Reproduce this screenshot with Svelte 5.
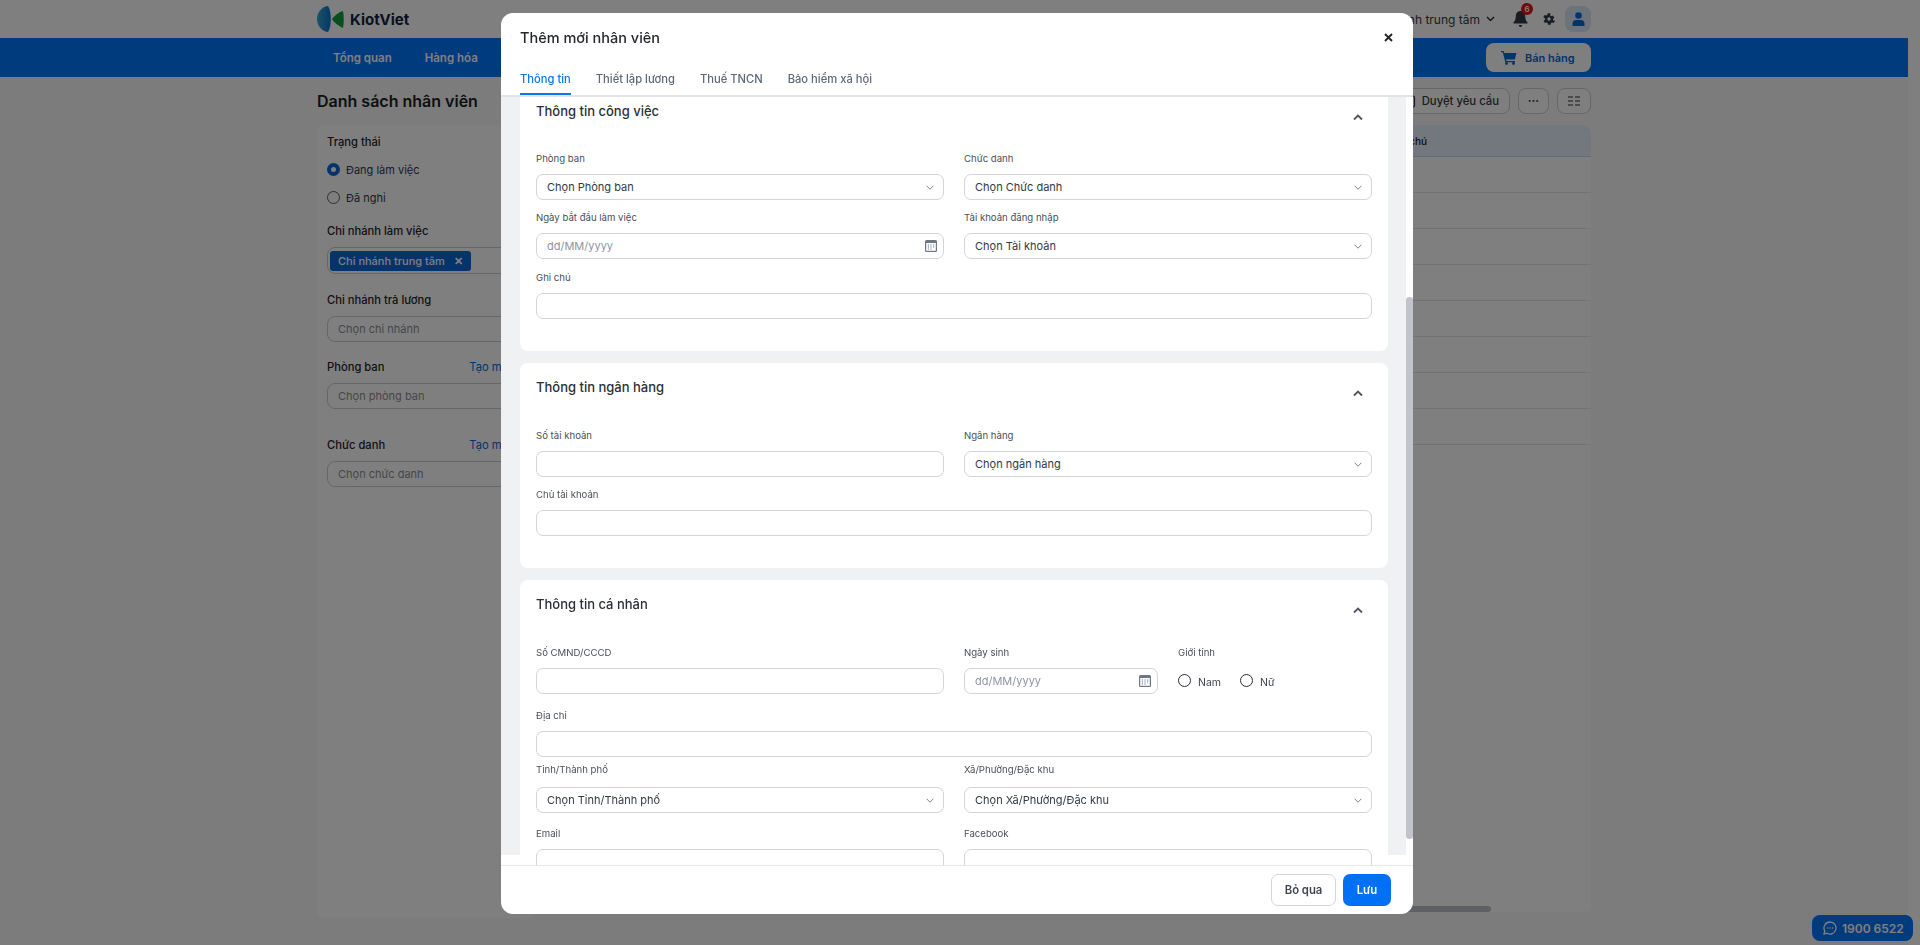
<script lang="ts">
  const navItems = ['Tổng quan', 'Hàng hóa', 'Đơn hàng', 'Khách hàng'];
  const tabs = ['Thông tin', 'Thiết lập lương', 'Thuế TNCN', 'Bảo hiểm xã hội'];
  const tableRows = Array.from({ length: 8 });
</script>

{#snippet chevron()}
  <svg class="chev" width="8" height="5" viewBox="0 0 8 5"><path d="M.5.7L4 4.200 7.500.7" fill="none" stroke="#7a808a" stroke-width="1"/></svg>
{/snippet}

{#snippet calendar()}
  <svg class="cal" width="12" height="12" viewBox="0 0 12 12">
    <rect x="0" y="0" width="12" height="12" rx="1.500" fill="#6f7785"/>
    <rect x="1.200" y="3" width="9.600" height="7.800" fill="#fff"/>
    <path d="M2.800 5h1.200M5.400 5h1.200M8 5h1.200M2.800 7h1.200M5.400 7h1.200M8 7h1.200M2.800 9h1.200M5.400 9h1.200" stroke="#6f7785" stroke-width="1"/>
  </svg>
{/snippet}

{#snippet selectField(label: string, value: string)}
  <div class="field">
    <span class="fieldLabel">{label}</span>
    <div class="control"><span>{value}</span>{@render chevron()}</div>
  </div>
{/snippet}

{#snippet textField(label: string)}
  <div class="field">
    <span class="fieldLabel">{label}</span>
    <div class="control"></div>
  </div>
{/snippet}

{#snippet dateField(label: string)}
  <div class="field">
    <span class="fieldLabel">{label}</span>
    <div class="control dateControl"><span class="placeholder">dd/MM/yyyy</span>{@render calendar()}</div>
  </div>
{/snippet}

{#snippet cardHead(title: string)}
  <div class="cardHead">
    <h3>{title}</h3>
    <svg width="10" height="7" viewBox="0 0 10 7"><path d="M1 5.500l4-4 4 4" fill="none" stroke="#50565f" stroke-width="1.800"/></svg>
  </div>
{/snippet}

<div class="page">
  <header class="topBar">
    <div class="wrap topInner">
      <div class="logo">
        <svg width="27" height="26" viewBox="0 0 27 26">
          <defs>
            <linearGradient id="lens" x1="0" x2="1" y1="0" y2="0">
              <stop offset="0" stop-color="#3ba5c9"/>
              <stop offset="1" stop-color="#0a6fd0"/>
            </linearGradient>
          </defs>
          <path d="M11 0C4 1 0 7 0 13s4 12 11 13c2-3 2.800-8 2.800-13S13 3 11 0z" fill="url(#lens)"/>
          <path d="M26 5c-4 1-9 5-11 8 2 4 7 7 11 9 1-5 1-12 0-17z" fill="#0ea13c"/>
        </svg>
        <span>KiotViet</span>
      </div>
      <div class="topRight">
        <span class="branch">Chi nhánh trung tâm</span>
        <svg width="9" height="6" viewBox="0 0 9 6"><path d="M1 1l3.500 3.500L8 1" fill="none" stroke="#333" stroke-width="1.500"/></svg>
        <div class="bell">
          <svg width="15" height="18" viewBox="0 0 15 18"><path d="M7.500 1C4.500 1 2.800 3.400 2.800 6.200c0 3.600-1.300 5-2.300 6.100v1.200h14v-1.200c-1-1.100-2.300-2.500-2.300-6.100C12.200 3.400 10.500 1 7.500 1zM5.800 15h3.400c0 1-.8 2-1.700 2s-1.700-1-1.700-2z" fill="#333a45"/></svg>
          <b>6</b>
        </div>
        <svg class="gear" width="16" height="16" viewBox="0 0 24 24"><path d="M19.400 13c.1-.3.100-.7.100-1s0-.7-.1-1l2.100-1.600-2-3.500-2.500 1c-.5-.4-1.100-.7-1.700-1L15.500 2.200h-4l-.4 2.700c-.6.3-1.200.6-1.700 1l-2.500-1-2 3.500L7.500 10c-.1.300-.1.700-.1 1s0 .7.100 1l-2.100 1.600 2 3.500 2.500-1c.5.400 1.100.7 1.700 1l.4 2.700h4l.4-2.700c.6-.3 1.200-.6 1.700-1l2.500 1 2-3.500zM13.500 13.500a2.500 2.500 0 1 1 0-5 2.500 2.500 0 0 1 0 5z" fill="#333a45" fill-rule="evenodd" transform="translate(-1.500 1)"/></svg>
        <div class="userBtn">
          <svg width="13" height="14" viewBox="0 0 13 14"><circle cx="6.500" cy="3.500" r="3.300" fill="#0a66d8"/><path d="M.5 14v-2.500C.5 9.300 2.300 8 4 8h5c1.700 0 3.500 1.300 3.500 3.500V14z" fill="#0a66d8"/></svg>
        </div>
      </div>
    </div>
  </header>

  <nav class="navBar">
    <div class="wrap navInner">
      <div class="navItems">
        {#each navItems as item}<span>{item}</span>{/each}
      </div>
      <button class="sellBtn">
        <svg width="16" height="15" viewBox="0 0 16 15"><path d="M0 1h2.600l.6 2H15.500l-1.700 6.500H5l.4 1.500h8.600v1.200H4.300L1.800 2.200H0z" fill="#0a66d8"/><circle cx="5.500" cy="13.500" r="1.400" fill="#0a66d8"/><circle cx="12.500" cy="13.500" r="1.400" fill="#0a66d8"/></svg>
        Bán hàng
      </button>
    </div>
  </nav>

  <main class="wrap content">
    <div class="pageHead">
      <h1>Danh sách nhân viên</h1>
      <div class="tools">
        <button class="toolBtn">
          <svg width="12" height="13" viewBox="0 0 12 13"><rect x="1.500" y="1" width="9" height="11" rx="1.500" fill="none" stroke="#333a45" stroke-width="1.200"/><path d="M3.500 4h5M3.500 6.500h5M3.500 9h5" stroke="#333a45"/></svg>
          Duyệt yêu cầu
        </button>
        <button class="toolBtn small dots">···</button>
        <button class="toolBtn small list">
          <svg width="12" height="10" viewBox="0 0 12 10"><path d="M0 1h5M7 1h5M0 5h5M7 5h5M0 9h5M7 9h5" stroke="#2b2f36" stroke-width="1.200"/></svg>
        </button>
      </div>
    </div>

    <div class="columns">
      <aside class="filters">
        <div class="filterLabel">Trạng thái</div>
        <div class="radioRow"><i class="radio on"></i><span>Đang làm việc</span></div>
        <div class="radioRow"><i class="radio"></i><span>Đã nghỉ</span></div>

        <div class="filterLabel branchLabel">Chi nhánh làm việc</div>
        <div class="filterBox tagBox"><span class="tag">Chi nhánh trung tâm <b>✕</b></span></div>

        <div class="filterLabel payLabel">Chi nhánh trả lương</div>
        <div class="filterBox">Chọn chi nhánh</div>

        <div class="filterLabel linkRow deptLabel">Phòng ban <a href="#top">Tạo mới</a></div>
        <div class="filterBox">Chọn phòng ban</div>

        <div class="filterLabel linkRow titleLabel">Chức danh <a href="#top">Tạo mới</a></div>
        <div class="filterBox">Chọn chức danh</div>
      </aside>

      <section class="tableArea">
        <div class="tableHead"><span>Ghi chú</span></div>
        {#each tableRows as _}
          <div class="tableRow"></div>
        {/each}
        <div class="hScroll"></div>
      </section>
    </div>
  </main>
</div>

<button class="hotline">
  <svg width="14" height="14" viewBox="0 0 14 14"><path d="M7 1a6 6 0 0 0-5.200 9L1 13l3-.8A6 6 0 1 0 7 1z" fill="none" stroke="#fff" stroke-width="1.300"/><circle cx="4.500" cy="7" r=".8" fill="#fff"/><circle cx="7" cy="7" r=".8" fill="#fff"/><circle cx="9.500" cy="7" r=".8" fill="#fff"/></svg>
  1900 6522
</button>

<div class="overlay"></div>

<div class="modal">
  <div class="modalHead">
    <div class="titleRow">
      <h2>Thêm mới nhân viên</h2>
      <svg width="9" height="9" viewBox="0 0 9 9"><path d="M1 1l7 7M8 1L1 8" stroke="#1f2329" stroke-width="1.800"/></svg>
    </div>
    <div class="tabs">
      {#each tabs as tab, i}
        <span class="tab" class:active={i === 0}>{tab}</span>
      {/each}
    </div>
  </div>

  <div class="modalBody">
    <div class="cards">
      <section class="card workCard">
        {@render cardHead('Thông tin công việc')}
        <div class="grid workGrid">
          {@render selectField('Phòng ban', 'Chọn Phòng ban')}
          {@render selectField('Chức danh', 'Chọn Chức danh')}
          {@render dateField('Ngày bắt đầu làm việc')}
          {@render selectField('Tài khoản đăng nhập', 'Chọn Tài khoản')}
          <div class="wide noteRow">{@render textField('Ghi chú')}</div>
        </div>
      </section>

      <section class="card bankCard">
        {@render cardHead('Thông tin ngân hàng')}
        <div class="grid">
          {@render textField('Số tài khoản')}
          {@render selectField('Ngân hàng', 'Chọn ngân hàng')}
          <div class="wide">{@render textField('Chủ tài khoản')}</div>
        </div>
      </section>

      <section class="card">
        {@render cardHead('Thông tin cá nhân')}
        <div class="grid personal">
          {@render textField('Số CMND/CCCD')}
          <div class="split">
            {@render dateField('Ngày sinh')}
            <div class="field">
              <span class="fieldLabel">Giới tính</span>
              <div class="genders">
                <label><i class="radio dark"></i><span>Nam</span></label>
                <label><i class="radio dark"></i><span>Nữ</span></label>
              </div>
            </div>
          </div>
          <div class="wide addressRow">{@render textField('Địa chỉ')}</div>
          <div class="cityRow">{@render selectField('Tỉnh/Thành phố', 'Chọn Tỉnh/Thành phố')}</div>
          <div class="cityRow">{@render selectField('Xã/Phường/Đặc khu', 'Chọn Xã/Phường/Đặc khu')}</div>
          <div class="contactRow">{@render textField('Email')}</div>
          <div class="contactRow">{@render textField('Facebook')}</div>
        </div>
      </section>
    </div>
    <div class="thumb"></div>
  </div>

  <div class="modalFoot">
    <button class="skipBtn">Bỏ qua</button>
    <button class="saveBtn">Lưu</button>
  </div>
</div>

<style>
  :global(body) {
    margin: 0;
    background: #fff;
    font-family: Inter, "Noto Sans", sans-serif;
    color: #1f2329;
    overflow: hidden;
  }

  button {
    font-family: inherit;
    cursor: pointer;
  }

  h1, h2, h3 {
    margin: 0;
  }

  .page {
    position: relative;
    width: 1908px;
    height: 945px;
    background: #f6f8f7;
    overflow: hidden;
  }

  .wrap {
    width: 1274px;
    margin: 0 auto;
  }

  .topBar {
    height: 38px;
    background: #fff;
  }

  .topInner {
    display: flex;
    align-items: center;
    justify-content: space-between;
    height: 100%;
  }

  .logo {
    display: flex;
    align-items: center;
    gap: 6px;
    font-size: 15px;
    font-weight: 700;
    color: #10243e;
  }

  .topRight {
    display: flex;
    align-items: center;
    font-size: 12px;
    color: #333a45;
  }

  .branch {
    margin-right: 6px;
  }

  .bell {
    position: relative;
    display: flex;
    margin-left: 18px;
    margin-right: 13px;
  }

  .bell b {
    position: absolute;
    top: -7px;
    right: -5px;
    width: 12px;
    height: 12px;
    border-radius: 50%;
    background: #e5121a;
    color: #fff;
    font-size: 8px;
    font-weight: 600;
    line-height: 12px;
    text-align: center;
  }

  .userBtn {
    display: flex;
    align-items: center;
    justify-content: center;
    width: 26px;
    height: 26px;
    margin-left: 8px;
    border-radius: 8px;
    background: #dbe6f5;
  }

  .navBar {
    height: 39px;
    background: #0076fa;
  }

  .navInner {
    display: flex;
    align-items: center;
    justify-content: space-between;
    height: 100%;
  }

  .navItems {
    display: flex;
    gap: 33px;
    padding-left: 16px;
    font-size: 11.500px;
    font-weight: 600;
    color: #fff;
  }

  .sellBtn {
    display: flex;
    align-items: center;
    gap: 8px;
    width: 105px;
    height: 29px;
    padding: 0 0 0 15px;
    border: 0;
    border-radius: 8px;
    background: #fff;
    color: #0a66d8;
    font-size: 11px;
    font-weight: 600;
  }

  .pageHead {
    display: flex;
    align-items: center;
    justify-content: space-between;
    height: 26px;
    margin-top: 11px;
  }

  h1 {
    font-size: 16px;
    font-weight: 600;
    color: #1b1f26;
  }

  .tools {
    display: flex;
    gap: 8px;
  }

  .toolBtn {
    display: flex;
    align-items: center;
    justify-content: center;
    gap: 6px;
    height: 26px;
    padding: 0 10px;
    border: 1px solid #c9ccd2;
    border-radius: 8px;
    background: #fff;
    color: #333a45;
    font-size: 11.300px;
    font-weight: 500;
  }

  .toolBtn.small {
    padding: 0;
  }

  .dots {
    width: 31px;
    font-weight: 700;
  }

  .list {
    width: 34px;
  }

  .columns {
    display: flex;
    gap: 12px;
    margin-top: 11px;
  }

  .filters {
    flex: none;
    box-sizing: border-box;
    width: 220px;
    height: 793px;
    padding: 9px 10px;
    border-radius: 8px;
    background: #fff;
    font-size: 11px;
  }

  .filterLabel {
    font-size: 11.200px;
    font-weight: 500;
    line-height: 16px;
    color: #1f2329;
  }

  .radioRow {
    display: flex;
    align-items: center;
    gap: 6px;
    height: 28px;
    color: #333a45;
  }

  .radioRow span {
    margin-top: 2px;
  }

  .filterLabel + .radioRow {
    margin-top: 5px;
  }

  .radio {
    flex: none;
    box-sizing: border-box;
    display: block;
    width: 13px;
    height: 13px;
    border: 1px solid #555b66;
    border-radius: 50%;
    background: #fff;
  }

  .radio.on {
    border: 4px solid #0a66d8;
  }

  .radio.dark {
    border: 1.200px solid #2b2f36;
  }

  .branchLabel {
    margin-top: 12px;
  }

  .payLabel {
    margin-top: 18px;
  }

  .deptLabel {
    margin-top: 17px;
  }

  .titleLabel {
    margin-top: 28px;
  }

  .linkRow {
    display: flex;
    justify-content: space-between;
    padding-right: 16px;
  }

  .linkRow a {
    color: #0a66d8;
    font-weight: 400;
    text-decoration: none;
  }

  .filterBox {
    box-sizing: border-box;
    display: flex;
    align-items: center;
    height: 26px;
    margin-top: 8px;
    padding-left: 10px;
    border: 1px solid #c9ccd2;
    border-radius: 8px;
    color: #8a8f98;
    font-size: 11px;
  }

  .tagBox {
    height: 27px;
    padding-left: 2px;
  }

  .tag {
    display: flex;
    justify-content: space-between;
    align-items: center;
    box-sizing: border-box;
    width: 141px;
    height: 20px;
    padding: 0 8px;
    border-radius: 3px;
    background: #0a66d8;
    color: #fff;
    font-size: 11px;
    font-weight: 500;
    white-space: nowrap;
  }

  .tableArea {
    position: relative;
    flex: 1;
    height: 787px;
    background: #fff;
    border-radius: 8px;
    overflow: hidden;
  }

  .tableHead {
    display: flex;
    align-items: center;
    justify-content: flex-end;
    box-sizing: border-box;
    height: 32px;
    padding-right: 164px;
    background: #e6eefc;
    border-bottom: 1px solid #c3d5f0;
    font-size: 10px;
    font-weight: 500;
  }

  .tableRow {
    height: 36px;
    box-sizing: border-box;
    border-bottom: 1px solid #e4e6e9;
  }

  .hScroll {
    position: absolute;
    left: 400px;
    bottom: 0;
    width: 542px;
    height: 6px;
    border-radius: 3px;
    background: #bdc0c8;
  }

  .hotline {
    position: fixed;
    right: 7px;
    bottom: 4px;
    display: flex;
    align-items: center;
    gap: 5px;
    height: 26px;
    width: 101px;
    padding: 0 0 0 11px;
    border: 0;
    border-radius: 8px;
    background: #0076fa;
    color: #fff;
    font-size: 12px;
    font-weight: 600;
    white-space: nowrap;
  }

  .overlay {
    position: fixed;
    inset: 0;
    background: rgba(0, 0, 0, 0.5);
  }

  .modal {
    position: fixed;
    top: 13px;
    left: 501px;
    display: flex;
    flex-direction: column;
    width: 912px;
    height: 901px;
    border-radius: 12px;
    background: #fff;
    overflow: hidden;
  }

  .modalHead {
    flex: none;
    box-sizing: border-box;
    height: 84px;
    padding: 0 20px 0 19px;
    border-bottom: 2px solid #e2e4e9;
  }

  .titleRow {
    display: flex;
    align-items: center;
    justify-content: space-between;
    height: 48px;
  }

  h2 {
    font-size: 14.500px;
    font-weight: 500;
    color: #25282e;
  }

  .tabs {
    display: flex;
    gap: 25px;
    height: 34px;
  }

  .tab {
    box-sizing: border-box;
    height: 34px;
    padding-top: 9px;
    font-size: 11.200px;
    line-height: 18px;
    color: #5d6878;
    font-weight: 500;
  }

  .tab.active {
    color: #0a76f0;
    border-bottom: 2px solid #0a76f0;
  }

  .modalBody {
    position: relative;
    flex: 1;
    min-height: 0;
    padding-right: 7px;
    overflow: hidden;
    background: #fff;
  }

  .cards {
    display: flex;
    flex-direction: column;
    gap: 12px;
    height: 100%;
    margin-top: -10px;
    padding: 0 18px 0 19px;
    background: #f0f1f3;
  }

  .card {
    flex: none;
    box-sizing: border-box;
    padding: 14px 16px 0 16px;
    border-radius: 8px;
    background: #fff;
  }

  .workCard {
    height: 264px;
  }

  .workGrid {
    margin-top: -1px;
  }

  .bankCard {
    height: 205px;
  }

  .cardHead {
    display: flex;
    align-items: flex-start;
    justify-content: space-between;
    height: 20px;
    margin-bottom: 31px;
    padding-right: 9px;
  }

  .cardHead svg {
    margin-top: 13px;
  }

  h3 {
    font-size: 13px;
    font-weight: 500;
    line-height: 20px;
    color: #2b2f36;
  }

  .grid {
    display: grid;
    grid-template-columns: 408px 408px;
    column-gap: 20px;
    row-gap: 10px;
  }

  .wide {
    grid-column: 1 / -1;
  }

  .noteRow {
    margin-top: 1px;
  }

  .field {
    display: flex;
    flex-direction: column;
    min-width: 0;
  }

  .fieldLabel {
    height: 16px;
    margin-bottom: 7px;
    font-size: 9.600px;
    line-height: 16px;
    color: #4a4f58;
  }

  .control {
    box-sizing: border-box;
    display: flex;
    align-items: center;
    justify-content: space-between;
    height: 26px;
    padding: 0 9px 0 10px;
    border: 1px solid #d3d5da;
    border-radius: 7px;
    background: #fff;
    font-size: 11px;
    color: #333a45;
  }

  .dateControl {
    padding-right: 6px;
  }

  .placeholder {
    color: #8e96a3;
  }

  .split {
    display: grid;
    grid-template-columns: 194px 194px;
    column-gap: 20px;
  }

  .genders {
    display: flex;
    gap: 19px;
    margin-top: 1px;
    font-size: 10.500px;
    color: #3f4650;
  }

  .genders label {
    display: flex;
    align-items: center;
    gap: 7px;
    height: 24px;
  }

  .genders .radio {
    margin-top: -2px;
  }

  .genders label span {
    margin-top: 2px;
  }

  .personal .addressRow {
    margin-top: 4px;
  }

  .personal .cityRow {
    margin-top: -5px;
  }

  .personal .cityRow :global(.fieldLabel) {
    margin-bottom: 9px;
  }

  .personal .contactRow {
    margin-top: 3px;
  }

  .thumb {
    position: absolute;
    top: 200px;
    right: 0;
    width: 7px;
    height: 542px;
    border-radius: 3px;
    background: #c1c5cb;
  }

  .modalFoot {
    flex: none;
    box-sizing: border-box;
    display: flex;
    justify-content: flex-end;
    align-items: center;
    gap: 7px;
    height: 49px;
    padding: 0 22px 0 0;
    border-top: 1px solid #e6e7ea;
  }

  .skipBtn, .saveBtn {
    height: 32px;
    border-radius: 7px;
    font-size: 11.300px;
    font-weight: 600;
  }

  .skipBtn {
    width: 65px;
    border: 1px solid #d3d5da;
    background: #fff;
    color: #3f4650;
  }

  .saveBtn {
    width: 48px;
    border: 0;
    background: #0070f4;
    color: #fff;
  }
</style>
